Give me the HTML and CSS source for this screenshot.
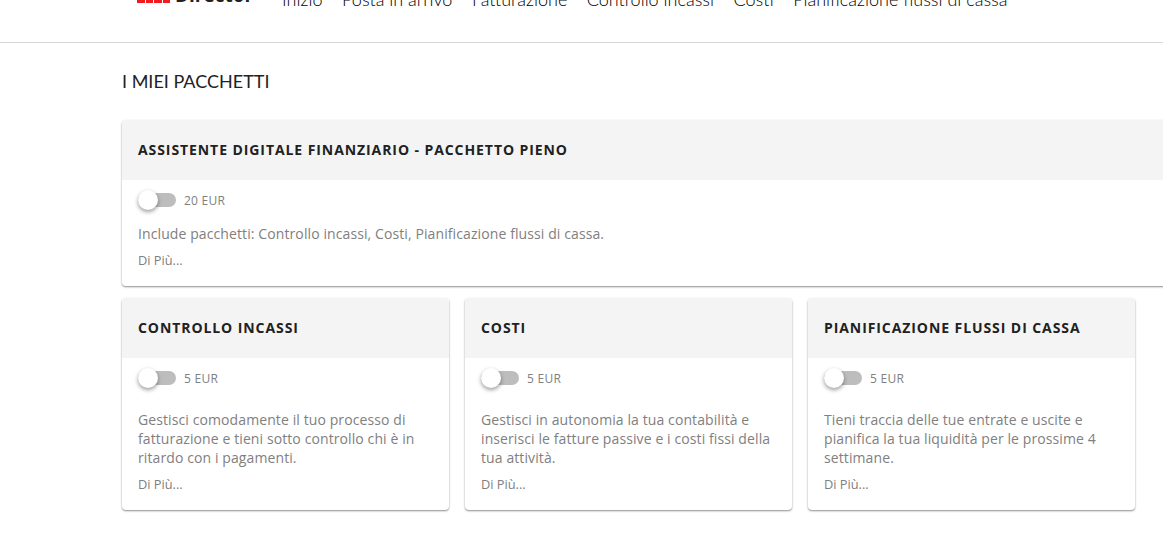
FILE: index.html
```html
<!DOCTYPE html>
<html lang="it">
<head>
  <meta charset="UTF-8" />
  <title>I miei pacchetti</title>
  <link rel="stylesheet" href="styles.css">
</head>
<body>
  <header class="topbar">
    <div class="logo"><span class="logo-mark"><i></i><i></i><i></i><i></i></span><span class="logo-text">Director</span></div>
    <nav class="nav">
      <a href="#">Inizio</a>
      <a href="#">Posta in arrivo</a>
      <a href="#">Fatturazione</a>
      <a href="#">Controllo incassi</a>
      <a href="#">Costi</a>
      <a href="#">Pianificazione flussi di cassa</a>
    </nav>
  </header>

  <main class="content">
    <h1>I MIEI PACCHETTI</h1>

    <section class="card card-full">
      <h2 class="card-title">ASSISTENTE DIGITALE FINANZIARIO - PACCHETTO PIENO</h2>
      <div class="card-body">
        <div class="price"><span class="switch"><span class="knob"></span></span>20 EUR</div>
        <p class="desc desc-short">Include pacchetti: Controllo incassi, Costi, Pianificazione flussi di cassa.</p>
        <a class="more" href="#">Di Più...</a>
      </div>
    </section>

    <div class="cards">
      <section class="card">
        <h2 class="card-title">CONTROLLO INCASSI</h2>
        <div class="card-body">
          <div class="price"><span class="switch"><span class="knob"></span></span>5 EUR</div>
          <p class="desc">Gestisci comodamente il tuo processo di fatturazione e tieni sotto controllo chi è in ritardo con i pagamenti.</p>
          <a class="more" href="#">Di Più...</a>
        </div>
      </section>
      <section class="card">
        <h2 class="card-title">COSTI</h2>
        <div class="card-body">
          <div class="price"><span class="switch"><span class="knob"></span></span>5 EUR</div>
          <p class="desc">Gestisci in autonomia la tua contabilità e inserisci le fatture passive e i costi fissi della tua attività.</p>
          <a class="more" href="#">Di Più...</a>
        </div>
      </section>
      <section class="card">
        <h2 class="card-title">PIANIFICAZIONE FLUSSI DI CASSA</h2>
        <div class="card-body">
          <div class="price"><span class="switch"><span class="knob"></span></span>5 EUR</div>
          <p class="desc">Tieni traccia delle tue entrate e uscite e pianifica la tua liquidità per le prossime 4 settimane.</p>
          <a class="more" href="#">Di Più...</a>
        </div>
      </section>
    </div>
  </main>
</body>
</html>
```

FILE: styles.css
```css
* {
  box-sizing: border-box;
}
html, body {
  height: 100%;
  overflow: hidden;
}
body {
  margin: 0;
  background: #fff;
  font-family: "Open Sans", sans-serif;
  color: #212121;
}
.topbar {
  display: flex;
  align-items: flex-end;
  height: 62px;
  margin-top: -19px;
  padding: 0 0 33px 137px;
  border-bottom: 1px solid #d8d8d8;
}
.logo {
  display: flex;
  align-items: flex-end;
  width: 145px;
  height: 36px;
  margin-bottom: 4px;
}
.logo-mark {
  display: flex;
  gap: 1px;
  margin-right: 5px;
  margin-bottom: 2px;
}
.logo-mark i {
  width: 7.5px;
  height: 10px;
  background: #f01a1f;
}
.logo-text {
  font-size: 19px;
  font-weight: 700;
  line-height: 20px;
  color: #222;
}
.nav {
  display: flex;
  gap: 19.5px;
}
.nav a {
  font-family: Lato, sans-serif;
  font-weight: 300;
  font-size: 18px;
  line-height: 20px;
  color: #000;
  text-decoration: none;
}
.content {
  width: 1070px;
  margin-left: 122px;
}
h1 {
  margin: 26px 0 27px;
  font-family: Lato, sans-serif;
  font-size: 18px;
  font-weight: 400;
  line-height: 24px;
  color: #222;
}
.card {
  background: #fff;
  border-radius: 4px;
  box-shadow: 0 1px 2px rgba(0, 0, 0, 0.45);
  overflow: hidden;
}
.card-title {
  margin: 0;
  height: 60px;
  padding: 0 16px;
  background: #f4f4f4;
  font-size: 14px;
  font-weight: 700;
  line-height: 59px;
  letter-spacing: 0.92px;
  color: #212121;
}
.card-body {
  padding: 10px 16px 17px;
}
.price {
  display: flex;
  align-items: center;
  height: 20px;
  font-size: 12px;
  letter-spacing: 0.25px;
  color: #808080;
}
.switch {
  position: relative;
  width: 38px;
  height: 14px;
  margin-right: 8px;
  border-radius: 7px;
  background: #bdbdbd;
}
.knob {
  position: absolute;
  left: 0;
  top: -3px;
  width: 20px;
  height: 20px;
  border-radius: 50%;
  background: #fff;
  box-shadow: 0 2px 4px rgba(0, 0, 0, 0.4);
}
.desc {
  margin: 22px 0 0;
  min-height: 57px;
  font-size: 14px;
  line-height: 19px;
  letter-spacing: 0.1px;
  color: #808080;
}
.desc-short {
  margin-top: 14px;
  min-height: 0;
}
.more {
  display: block;
  margin-top: 8px;
  font-size: 12.8px;
  line-height: 18px;
  color: #808080;
  text-decoration: none;
}
.cards {
  display: grid;
  grid-template-columns: repeat(3, 327px);
  gap: 16px;
  margin-top: 12px;
}
```
